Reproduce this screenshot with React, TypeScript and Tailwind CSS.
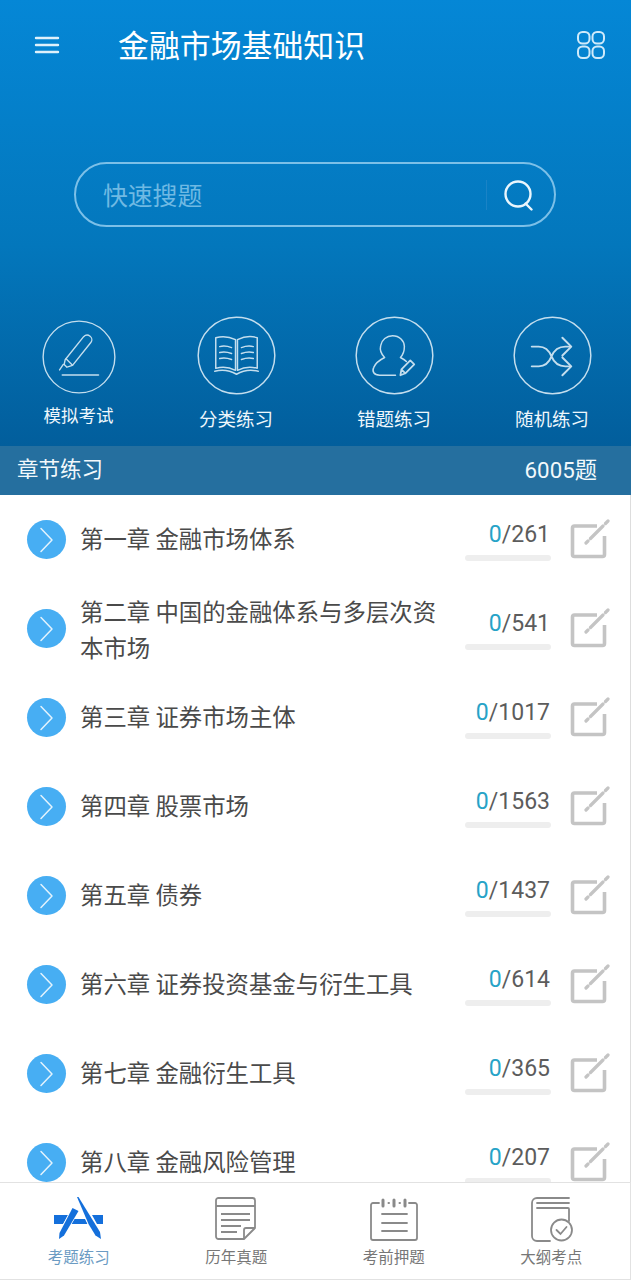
import React from "react";

const cjk = { fontFamily: '"Noto Sans CJK SC", sans-serif' };
const mixed = { fontFamily: 'Roboto, "Noto Sans CJK SC", sans-serif' };

const chapters: { t: string; n: string }[] = [
  { t: "第一章 金融市场体系", n: "261" },
  { t: "第二章 中国的金融体系与多层次资本市场", n: "541" },
  { t: "第三章 证券市场主体", n: "1017" },
  { t: "第四章 股票市场", n: "1563" },
  { t: "第五章 债券", n: "1437" },
  { t: "第六章 证券投资基金与衍生工具", n: "614" },
  { t: "第七章 金融衍生工具", n: "365" },
  { t: "第八章 金融风险管理", n: "207" },
];

function Menu() {
  return (
    <svg width="26" height="18" viewBox="0 0 26 18" fill="none" stroke="#dff1fb" strokeWidth="2.4" strokeLinecap="round">
      <path d="M2 2h22M2 9h22M2 16h22" />
    </svg>
  );
}

function Grid() {
  return (
    <svg width="30" height="30" viewBox="0 0 30 30" fill="none" stroke="#cfeafa" strokeWidth="2">
      <rect x="2" y="2" width="11.5" height="11.500" rx="4.500" />
      <rect x="16.5" y="2" width="11.5" height="11.500" rx="4.500" />
      <rect x="2" y="16.5" width="11.5" height="11.500" rx="4.500" />
      <rect x="16.5" y="16.5" width="11.5" height="11.500" rx="4.500" />
    </svg>
  );
}

function Search() {
  return (
    <svg width="32" height="32" viewBox="0 0 32 32" fill="none" stroke="#eaf6fd" strokeWidth="2.4" strokeLinecap="round">
      <circle cx="15" cy="15" r="12.5" />
      <path d="M22.5 24.5l6 6" />
    </svg>
  );
}

function Circle({ size, children }: { size: number; children: React.ReactNode }) {
  return (
    <svg width={size} height={size} viewBox="0 0 80 80" fill="none" stroke="#c4deee" strokeWidth="1.5" strokeLinecap="round" strokeLinejoin="round">
      <circle cx="40" cy="40" r="38.8" />
      {children}
    </svg>
  );
}

function Pen() {
  return (
    <Circle size={74}>
      <path d="M19 54l4-6M25 43l20-25c2-2 5-2 7-.5s2.400 4.500 1 6.500L33 49l-6 2-3-3z" strokeWidth="1.500" />
      <path d="M26 42l7 7" strokeWidth="1.500" />
      <path d="M22 59.500h39" strokeWidth="1.800" />
    </Circle>
  );
}

function Book() {
  return (
    <Circle size={79}>
      <path d="M19 22c7-2 14-1 20 2v31c-6-3-13-4-20-2zM41 24c6-3 14-4 20-2v31c-7-2-14-1-20 2z" />
      <path d="M18 56c8-2 15-1 22 3 7-4 14-5 22-3" />
      <path d="M23 31c4-1 8-.5 12 1M23 37c4-1 8-.5 12 1M23 43c4-1 8-.5 12 1M45 32c4-1.500 8-2 12-1M45 38c4-1.500 8-2 12-1M45 44c4-1.500 8-2 12-1" />
    </Circle>
  );
}

function Person() {
  return (
    <Circle size={79}>
      <path d="M41 60H25c-6 0-8-4-6-8 2-5 7-8 11-10-3-3-5-8-4-12 1-6 6-10 12-10 7 0 12 5 12 11 0 4-1 8-4 11 2 1 4 2 6 4" strokeWidth="1.500" />
      <path d="M46 60l1-6 9-9 4 4-9 9zM47 54l4 4" strokeWidth="1.800" />
    </Circle>
  );
}

function Shuffle() {
  return (
    <Circle size={79}>
      <path d="M19 31h7c8 0 11 5 13 10s6 10 14 10h5M19 51h7c8 0 11-5 13-10s6-10 14-10h5" strokeWidth="2" />
      <path d="M50 22l9 9-9 9M50 42l9 9-9 9" strokeWidth="2" />
    </Circle>
  );
}

function Chevron() {
  return (
    <div className="flex h-[39px] w-[39px] shrink-0 items-center justify-center rounded-full bg-[#47aef3]">
      <svg width="15" height="26" viewBox="0 0 15 26" fill="none" stroke="#e3f3fd" strokeWidth="1.500" strokeLinecap="round" strokeLinejoin="round">
        <path d="M2 1.500L13 13 2 24.500" />
      </svg>
    </div>
  );
}

function Edit() {
  return (
    <svg width="40" height="41" viewBox="0 0 40 41" fill="none" stroke="#c4c4c4" strokeWidth="3.600" strokeLinejoin="round">
      <path d="M27 7H4.500a2 2 0 0 0-2 2v26.500a2 2 0 0 0 2 2H32.500a2 2 0 0 0 2-2V17" />
      <path d="M16 24l2-2M20.500 19.500L33 7M35.500 4.500L38 2" strokeWidth="3.200" strokeLinecap="round" />
    </svg>
  );
}

function AppIcon() {
  return (
    <svg width="50" height="46" viewBox="0 0 50 46" fill="#146fdb">
      <g transform="translate(0 1)">
        <path d="M0 18h14l-5 9H0zM38 18h11v9H43zM20 22h11l2.500 5H17z" />
        <path d="M18.500 11l6 3L10 38.500 5 42l.5-6z" stroke="#ffffff" strokeWidth="1.400" paintOrder="stroke" />
        <path d="M23 0h1.500L46 35l1 7-5.500-3.500L34.500 27z" stroke="#ffffff" strokeWidth="1.400" paintOrder="stroke" />
      </g>
    </svg>
  );
}

function Paper() {
  return (
    <svg width="44" height="46" viewBox="0 0 44 46" fill="none" stroke="#8a8a8a" strokeWidth="1.800" strokeLinejoin="round">
      <g transform="translate(1 2)">
        <path d="M29 41H3.500a2.500 2.500 0 0 1-2.500-2.500v-36A2.500 2.500 0 0 1 3.500 0h34A2.500 2.500 0 0 1 40 2.500V30z" />
        <path d="M29 41V32a2 2 0 0 1 2-2h9" />
        <path d="M1 8h39" />
        <path d="M6 16h29M6 22h29M6 28h20M6 34h16" />
      </g>
    </svg>
  );
}

function Notes() {
  return (
    <svg width="48" height="46" viewBox="0 0 48 46" fill="none" stroke="#8a8a8a" strokeWidth="1.800" strokeLinecap="round">
      <g transform="translate(0 1)">
        <path d="M9 6H3a2 2 0 0 0-2 2v33a2 2 0 0 0 2 2h42a2 2 0 0 0 2-2V8a2 2 0 0 0-2-2h-6" />
        <path d="M13 3v6M24 3v6M35 3v6" strokeWidth="3" />
        <path d="M18.500 6h.5M29.500 6h.5" strokeWidth="2" />
        <path d="M12 17h25M12 26h25M12 34h25" />
      </g>
    </svg>
  );
}

function BookCheck() {
  return (
    <svg width="44" height="46" viewBox="0 0 44 46" fill="none" stroke="#8a8a8a" strokeWidth="1.800" strokeLinecap="round" className="overflow-visible">
      <g transform="translate(2 0)">
        <path d="M19 45H6a5 5 0 0 1-5-5V7a5 5 0 0 1 5-5h32" />
        <path d="M6 7h32M6 12h31a1 1 0 0 1 1 1v12" />
        <circle cx="30.500" cy="34" r="10.500" />
        <path d="M25.500 34l4 4 6-7" />
      </g>
    </svg>
  );
}

function Quick({ icon, label, big }: { icon: React.ReactNode; label: string; big?: boolean }) {
  return (
    <div className={big ? "flex w-[158px] flex-col items-center" : "flex w-[157px] flex-col items-center pt-[4px]"}>
      {icon}
      <div
        className={
          big
            ? "mt-[9px] text-[18.500px] leading-[28px] text-[#eef7fc]"
            : "mt-[8px] text-[17.500px] leading-[26px] text-[#eef7fc]"
        }
        style={cjk}
      >
        {label}
      </div>
    </div>
  );
}

function NavItem({ icon, label, active }: { icon: React.ReactNode; label: string; active?: boolean }) {
  return (
    <div className="flex w-[157.500px] flex-col items-center">
      <div className="flex h-[46px] items-start justify-center">{icon}</div>
      <div
        className={
          active
            ? "mt-[2px] text-[15.500px] leading-[24px] text-[#6b9bc3]"
            : "mt-[2px] text-[15.500px] leading-[24px] text-[#777777]"
        }
        style={cjk}
      >
        {label}
      </div>
    </div>
  );
}

export default function App() {
  return (
    <div className="flex h-[1280px] w-[631px] flex-col overflow-hidden bg-white">
      <div className="flex h-[446px] shrink-0 flex-col bg-gradient-to-b from-[#0587d6] via-[#0377bc] via-55% to-[#025e9c]">
        <div className="flex h-[90px] items-center pl-[34px] pr-[25px]">
          <Menu />
          <div className="ml-[59px] mb-[2px] -translate-x-px text-[30.900px] leading-[40px] text-white" style={cjk}>
            金融市场基础知识
          </div>
          <div className="ml-auto">
            <Grid />
          </div>
        </div>
        <div className="ml-[74px] mt-[72px] flex h-[65px] w-[482px] items-center rounded-full border-2 border-[#7cc0e8] pl-[27px]">
          <div className="mb-[2px] text-[24.800px] leading-[32px] text-[#6fb9e3]" style={cjk}>
            快速搜题
          </div>
          <div className="ml-auto h-[30px] w-px bg-[#1a83c6]" />
          <div className="ml-[16px] mr-[19px] flex">
            <Search />
          </div>
        </div>
        <div className="mt-[89px] flex">
          <Quick icon={<Pen />} label="模拟考试" />
          <Quick icon={<Book />} label="分类练习" big />
          <Quick icon={<Person />} label="错题练习" big />
          <Quick icon={<Shuffle />} label="随机练习" big />
        </div>
      </div>

      <div className="flex h-[49px] shrink-0 items-center justify-between bg-[#256f9f] pl-[17px] pr-[34px] text-[#f2f8fb]" style={mixed}>
        <span className="text-[21.500px]">章节练习</span>
        <span className="text-[22.300px]">6005题</span>
      </div>

      <div className="min-h-0 flex-1 overflow-hidden border-r border-[#dddddd]">
        {chapters.map((c) => (
          <div key={c.t} className="flex h-[89px] items-center pl-[27px]">
            <Chevron />
            <div
              className={
                c.t.length > 16
                  ? "ml-[14px] w-[362px] text-[23.400px] leading-[36px] text-[#4a4a4a]"
                  : "mb-[4px] ml-[14px] w-[362px] text-[23.400px] leading-[36px] text-[#4a4a4a]"
              }
              style={cjk}
            >
              {c.t}
            </div>
            <div className="ml-[23px] flex w-[87px] flex-col items-end">
              <div className="translate-y-px pr-[2px] text-[23px] leading-[30px] text-[#5c5c5c]" style={mixed}>
                <span className="text-[#27a3c7]">0</span>/{c.n}
              </div>
              <div className="mt-[6px] h-[6px] w-[86px] self-start rounded-full bg-[#eeeeee]" />
            </div>
            <div className="ml-[18px] flex">
              <Edit />
            </div>
          </div>
        ))}
      </div>

      <div className="flex h-[98px] shrink-0 border-b border-r border-t border-[#e2e2e2] bg-white pt-[13px]">
        <NavItem icon={<AppIcon />} label="考题练习" active />
        <NavItem icon={<Paper />} label="历年真题" />
        <NavItem icon={<Notes />} label="考前押题" />
        <NavItem icon={<BookCheck />} label="大纲考点" />
      </div>
    </div>
  );
}
